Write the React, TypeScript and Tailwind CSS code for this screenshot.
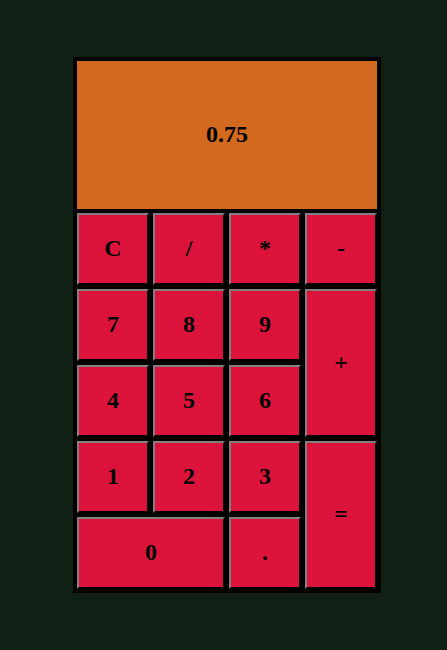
const keys: { label: string; span?: string }[] = [
  { label: "C" },
  { label: "/" },
  { label: "*" },
  { label: "-" },
  { label: "7" },
  { label: "8" },
  { label: "9" },
  { label: "+", span: "row-span-2" },
  { label: "4" },
  { label: "5" },
  { label: "6" },
  { label: "1" },
  { label: "2" },
  { label: "3" },
  { label: "=", span: "row-span-2" },
  { label: "0", span: "col-span-2" },
  { label: "." },
];

export default function App() {
  return (
    <div className="min-h-[650px] w-full bg-[#112015] pt-[57px] font-['Liberation_Serif',serif]">
      <div className="ml-[73px] flex w-[308px] flex-col gap-1 border-4 border-black bg-black">
        {/* Display */}
        <div className="flex h-[148px] items-center justify-center bg-[#d2691e] pb-[3px] text-2xl font-bold leading-none text-black">
          0.75
        </div>

        {/* Keypad */}
        <div className="grid grid-cols-[repeat(4,72px)] auto-rows-[72px] gap-1">
          {keys.map((k) => (
            <button
              key={k.label}
              className={`flex items-center justify-center border-2 border-t-[#808080] border-l-[#808080] border-b-black border-r-black bg-[#dc143c] pb-[3px] text-2xl font-bold leading-none text-black ${k.span ?? ""}`}
            >
              {k.label}
            </button>
          ))}
        </div>
      </div>
    </div>
  );
}
